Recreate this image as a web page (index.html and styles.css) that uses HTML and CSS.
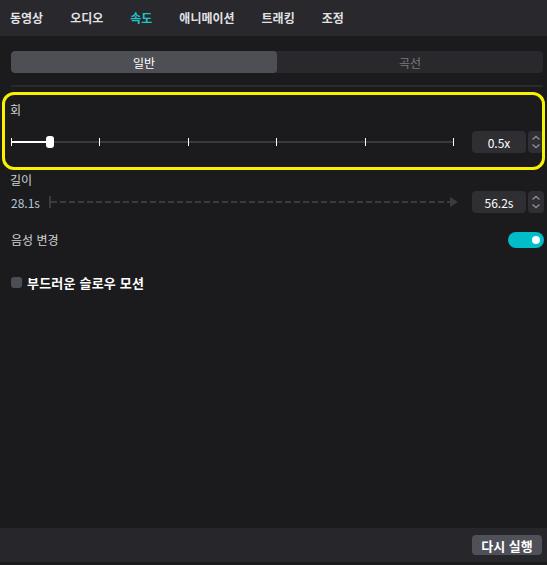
FILE: index.html
```html
<!DOCTYPE html>
<html lang="ko">
<head>
<meta charset="utf-8">
<link rel="stylesheet" href="styles.css">
</head>
<body>
<div class="app">
  <nav class="tabs">
    <span class="tab">동영상</span>
    <span class="tab">오디오</span>
    <span class="tab active">속도</span>
    <span class="tab">애니메이션</span>
    <span class="tab">트래킹</span>
    <span class="tab">조정</span>
  </nav>
  <main class="main">
    <div class="seg">
      <div class="seg-item on">일반</div>
      <div class="seg-item">곡선</div>
    </div>
    <div class="divider"></div>

    <div class="label first">회</div>
    <div class="row r-speed">
      <svg class="slider" width="444" height="22" viewBox="0 0 444 22">
        <line x1="0" y1="11" x2="443" y2="11" stroke="#38383d" stroke-width="2"/>
        <line x1="0" y1="11" x2="42" y2="11" stroke="#ffffff" stroke-width="2"/>
        <g stroke="#ffffff" stroke-width="1">
          <line x1="0.5" y1="7" x2="0.5" y2="15"/>
          <line x1="88.5" y1="7" x2="88.5" y2="15"/>
          <line x1="177.5" y1="7" x2="177.5" y2="15"/>
          <line x1="265.5" y1="7" x2="265.5" y2="15"/>
          <line x1="354.5" y1="7" x2="354.5" y2="15"/>
          <line x1="442.5" y1="7" x2="442.5" y2="15"/>
        </g>
        <rect x="35" y="5" width="8" height="12" rx="3" fill="#ffffff"/>
      </svg>
      <div class="val">0.5x</div>
      <div class="spin">
        <svg width="16" height="22" viewBox="0 0 16 22"><path d="M4.5 8.5 L8 5.5 L11.5 8.5 M4.5 13.5 L8 16.5 L11.5 13.5" fill="none" stroke="#8a8a90" stroke-width="1.5"/></svg>
      </div>
    </div>

    <div class="label second">길이</div>
    <div class="row r-len">
      <span class="cur">28.1s</span>
      <svg class="dash" width="410" height="22" viewBox="0 0 410 22">
        <line x1="1" y1="5" x2="1" y2="17" stroke="#3a3a3f" stroke-width="2"/>
        <line x1="2" y1="11" x2="402" y2="11" stroke="#3a3a3f" stroke-width="2" stroke-dasharray="6 3"/>
        <path d="M401 6 L409 11 L401 16 Z" fill="#3a3a3f"/>
      </svg>
      <div class="val">56.2s</div>
      <div class="spin">
        <svg width="16" height="22" viewBox="0 0 16 22"><path d="M4.5 8.5 L8 5.5 L11.5 8.5 M4.5 13.5 L8 16.5 L11.5 13.5" fill="none" stroke="#8a8a90" stroke-width="1.5"/></svg>
      </div>
    </div>

    <div class="row r-voice">
      <span class="label">음성 변경</span>
      <span class="toggle"><span class="knob"></span></span>
    </div>

    <div class="row r-smooth">
      <span class="check"></span>
      <span class="smooth">부드러운 슬로우 모션</span>
    </div>

    <div class="highlight"></div>
  </main>
  <footer class="foot">
    <button class="btn">다시 실행</button>
  </footer>
</div>
</body>
</html>
```

FILE: styles.css
```css
* { box-sizing: border-box; }
html, body { margin: 0; padding: 0; }
body {
  background: #1b1b1d;
  font-family: "Noto Sans CJK KR", "Noto Sans", sans-serif;
  color: #d6d6d8;
  font-size: 12px;
}
.app {
  width: 547px;
  height: 565px;
  display: flex;
  flex-direction: column;
}
.tabs {
  height: 36px;
  background: #28282d;
  display: flex;
  align-items: center;
  gap: 27px;
  padding-left: 10px;
  flex: none;
}
.tab {
  font-size: 12px;
  font-weight: 700;
  color: #e2e2e4;
  line-height: 16px;
}
.tab.active { color: #1fc4ca; }
.main {
  position: relative;
  flex: 1;
  padding: 15px 3px 0 11px;
}
.seg {
  height: 22px;
  margin-right: 1px;
  border-radius: 4px;
  background: #29292d;
  display: grid;
  grid-template-columns: 1fr 1fr;
  overflow: hidden;
}
.seg-item {
  display: flex;
  align-items: center;
  justify-content: center;
  font-size: 12px;
  color: #7a7a7e;
}
.seg-item.on {
  background: #4e4f55;
  color: #ffffff;
  border-radius: 4px;
}
.divider {
  margin-top: 12px;
  margin-right: 1px;
  height: 2px;
  background: #2b2b2f;
}
.label {
  font-size: 12px;
  line-height: 16px;
  color: #d0d0d2;
  margin-left: -1px;
}
.label.first { margin-top: 15px; }
.label.second { margin-top: 19px; }
.row {
  display: flex;
  align-items: center;
}
.r-speed { margin-top: 13px; height: 22px; }
.r-len { margin-top: 3px; height: 22px; }
.slider { flex: none; margin-right: 17px; }
.cur {
  width: 38px;
  color: #b5c5d8;
  font-size: 12px;
  flex: none;
}
.dash { flex: none; margin-right: 13px; }
.val {
  width: 54px;
  height: 22px;
  background: #2e2e33;
  border-radius: 4px;
  color: #ffffff;
  font-size: 12px;
  display: flex;
  align-items: center;
  justify-content: center;
  margin-left: auto;
}
.spin {
  width: 16px;
  height: 22px;
  margin-left: 2px;
  background: #2e2e33;
  border-radius: 4px;
  display: flex;
}
.r-voice {
  margin-top: 19px;
  height: 16px;
  justify-content: space-between;
}
.r-voice .label { margin-left: 0; }
.toggle {
  width: 36px;
  height: 16px;
  border-radius: 8px;
  background: #00bdc9;
  display: flex;
  align-items: center;
  justify-content: flex-end;
  padding-right: 4px;
}
.knob {
  width: 8px;
  height: 8px;
  border-radius: 50%;
  background: #ffffff;
}
.r-smooth {
  margin-top: 26px;
  height: 16px;
  gap: 5px;
}
.check {
  width: 11px;
  height: 11px;
  border-radius: 3px;
  background: #4d4e55;
}
.smooth {
  font-size: 13px;
  font-weight: 700;
  color: #ffffff;
  letter-spacing: 0.2px;
}
.highlight {
  position: absolute;
  left: 2px;
  top: 56px;
  width: 543px;
  height: 78px;
  border: 3px solid #f6f200;
  border-radius: 12px;
  pointer-events: none;
}
.foot {
  flex: none;
  height: 34px;
  margin-bottom: 3px;
  background: #27272b;
  display: flex;
  align-items: center;
  justify-content: flex-end;
  padding-right: 5px;
}
.btn {
  width: 70px;
  height: 20px;
  border: 0;
  border-radius: 4px;
  background: #505158;
  color: #ffffff;
  font-family: "Noto Sans CJK KR", "Noto Sans", sans-serif;
  font-size: 13px;
  font-weight: 700;
  padding: 0;
  display: flex;
  align-items: center;
  justify-content: center;
}
```
